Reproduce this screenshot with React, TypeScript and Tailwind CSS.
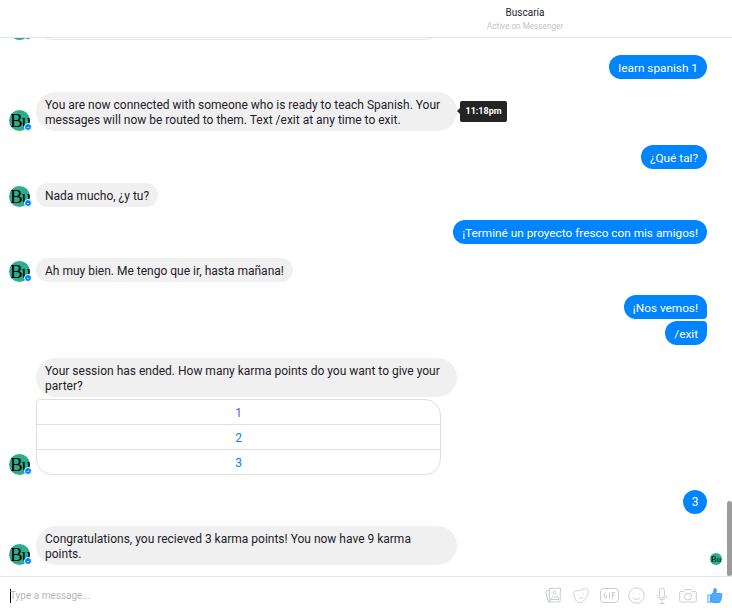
const font = { fontFamily: 'Roboto, sans-serif' };

function Avatar({ small = false }: { small?: boolean }) {
  if (small) {
    return (
      <div className="w-3 h-3 rounded-full bg-[#2aae8e] overflow-hidden flex items-center justify-center whitespace-nowrap text-[9px] leading-3 text-black font-['Liberation_Serif',serif]">
        Bu
      </div>
    );
  }
  return (
    <div className="relative w-[21px] h-[21px] shrink-0">
      <div className="w-[21px] h-[21px] rounded-full bg-[#2aae8e] overflow-hidden flex items-center whitespace-nowrap pl-px text-[19px] leading-[21px] tracking-[-1px] text-black font-['Liberation_Serif',serif]">
        Bu
      </div>
      <div className="absolute -right-[2px] bottom-0 w-[6px] h-[6px] rounded-full bg-[#0084ff] border border-white box-content flex items-center justify-center">
        <div className="w-[2px] h-px bg-white/70" />
      </div>
    </div>
  );
}

function Theirs({ children, mt, tip = false }: { children: React.ReactNode; mt: string; tip?: boolean }) {
  return (
    <div className={`flex items-end pl-[9px] ${mt}`}>
      <Avatar />
      <div className="relative ml-[6px] max-w-[421px]">
        <div className="bg-[#f1f0f0] rounded-[20px] px-[9px] pt-[6px] pb-[3px] text-[12px] leading-[15px] text-[#1d2129] min-h-[24px]">
          {children}
        </div>
        {tip && (
          <div className="absolute left-full top-[9px] ml-[3px] bg-[#242424] text-white text-[9px] leading-[21px] font-bold h-[21px] w-[47px] rounded-[2px] text-center">
            11:18pm
            <div className="absolute -left-[3px] top-[7px] w-0 h-0 border-y-[3px] border-y-transparent border-r-[3px] border-r-[#242424]" />
          </div>
        )}
      </div>
    </div>
  );
}

function Mine({ children, mt, top = false, bottom = false }: { children: React.ReactNode; mt: string; top?: boolean; bottom?: boolean }) {
  return (
    <div className={`flex justify-end pr-[25px] ${mt}`}>
      <div
        className={`bg-[#0084ff] text-white text-[11.800px] leading-[15px] px-[9px] pt-[6px] h-6 rounded-[12px] whitespace-nowrap ${top ? "rounded-br-[4px]" : ""} ${bottom ? "rounded-tr-[4px]" : ""}`}
      >
        {children}
      </div>
    </div>
  );
}

function Composer() {
  const cls = "text-[#c4c7ca]";
  return (
    <div className="h-9 border-t border-[#e4e6e8] flex items-center pt-[2px] pl-[10px] pr-[9px] bg-white">
      <div className="w-px h-[14px] bg-black -mr-px" />
      <div className="flex-1 text-[10px] leading-[14px] text-[#b4b7bb]">Type a message...</div>
      <div className="flex items-center">
        <svg className={cls} width="16" height="17" viewBox="0 0 16 17" fill="none" stroke="currentColor" strokeWidth="0.9">
          <path d="M4 3.300 .7 4.500l2.600 10.300 3-.9" />
          <path d="M4.300 1.600 15.500 1l-.4 13.800-10.800.3z" />
          <circle cx="9.500" cy="5.500" r="1.300" />
          <path d="m5.500 12.500 3-3.500 2 2 1.800-1.500 1.700 3z" />
        </svg>
        <svg className={`${cls} ml-3`} width="16" height="17" viewBox="0 0 17 17" fill="none" stroke="currentColor" strokeWidth="0.9">
          <path d="M1 6c0-1.300.6-2 1.500-2.200C5 3.300 7 3.400 9 2.400c2-1 3.500-1.300 5-1.200 1 .1 1.700.8 1.900 1.800.5 3 0 5.500-1.900 8-1.800 2.400-3.500 4.500-6 5-2.500.4-4-.7-5-2.500C2 11.500 1 9 1 6z" />
          <path d="M5 7.800h.8M10.500 6.300h.8" strokeWidth="1.300" />
          <path d="M6 11c1.500 1 3.500.5 4.800-1.300" />
        </svg>
        <svg className={`${cls} ml-[10px]`} width="21" height="17" viewBox="0 0 20 17" fill="none" stroke="currentColor" strokeWidth="0.9">
          <rect x="1" y="1.500" width="18" height="14" rx="3.500" />
          <path d="M7 6.200c-.8-.7-2.500-.4-2.500 2.300s1.700 3 2.500 2.300V8.800H5.800M10 5.500v6M13 11.500v-6h2.500M13 8.300h2.200" />
        </svg>
        <svg className={`${cls} ml-2`} width="17" height="17" viewBox="0 0 17 17" fill="none" stroke="currentColor" strokeWidth="0.9">
          <circle cx="8.500" cy="8.500" r="7.700" />
          <path d="M5.500 6.500v.6M11.500 6.500v.6" strokeWidth="1.200" />
          <path d="M4.800 10.500c1.500 2.500 5.900 2.500 7.400 0" />
        </svg>
        <svg className={`${cls} ml-[11px]`} width="12" height="17" viewBox="0 0 12 17" fill="none" stroke="currentColor" strokeWidth="0.9">
          <rect x="3.500" y="1" width="5" height="10" rx="2.500" />
          <path d="M1.500 8c0 6 9 6 9 0M6 13v3.500M3.500 16.500h5" />
        </svg>
        <svg className={`${cls} ml-[11px]`} width="18" height="17" viewBox="0 0 18 17" fill="none" stroke="currentColor" strokeWidth="0.9">
          <path d="M1.500 4.500h3l1.500-2h6l1.500 2h3c.5 0 .8.300.8.800v8.900c0 .5-.3.800-.8.800h-15c-.5 0-.8-.3-.8-.8V5.300c0-.5.300-.8.800-.8z" />
          <circle cx="9" cy="9.500" r="3.500" />
          <path d="M14.500 6.500h.8" />
        </svg>
        <svg className="ml-[10px]" width="16" height="17" viewBox="0 0 17 17" fill="none">
          <path d="M1 8h3v7.500H1z" stroke="#6bb5ff" strokeWidth="1.300" />
          <path d="M4 8c2-1 3.500-3.500 3.500-6 0-1.500 2.500-1.200 2.500 1 0 1.500-.5 2.500-1 3.500h5.500c1.800 0 1.800 2.500.5 2.800 1 .7.700 2.300-.3 2.600.6.800.2 2-.7 2.200.2 1-.5 1.900-1.500 1.900H7c-1.300 0-2-.5-3-1z" fill="#4fa9ff" stroke="#2f97ff" strokeWidth="1" />
        </svg>
      </div>
    </div>
  );
}

export default function App() {
  return (
    <div className="relative w-[732px] h-[612px] bg-white flex flex-col overflow-hidden" style={font}>
      <header className="h-[38px] shrink-0 border-b border-[#e4e6e8] flex flex-col items-center pt-[6px] pl-[318px]">
        <div className="text-[10px] leading-[14px] text-[#1d2129]">Buscaría</div>
        <div className="text-[8.200px] leading-[11px] mt-px text-[#bec3c9]">Active on Messenger</div>
      </header>

      <main className="relative flex-1 min-h-0 overflow-hidden">
        <div className="flex items-end pl-[9px] -mt-[19px] h-[21px]">
          <Avatar />
          <div className="ml-[6px] w-[405px] h-[21px] border border-[#e4e6e8] rounded-b-[16px]" />
        </div>

        <Mine mt="mt-[15px]">learn spanish 1</Mine>

        <Theirs mt="mt-[13px]" tip>
          You are now connected with someone who is ready to teach Spanish. Your messages will now be routed to them. Text /exit at any time to exit.
        </Theirs>

        <Mine mt="mt-[14px]">¿Qué tal?</Mine>
        <Theirs mt="mt-[14px]">Nada mucho, ¿y tu?</Theirs>
        <Mine mt="mt-[13px]">¡Terminé un proyecto fresco con mis amigos!</Mine>
        <Theirs mt="mt-[14px]">Ah muy bien. Me tengo que ir, hasta mañana!</Theirs>
        <Mine mt="mt-[13px]" top>¡Nos vemos!</Mine>
        <Mine mt="mt-[2px]" bottom>/exit</Mine>

        <div className="flex items-end pl-[9px] mt-[13px]">
          <Avatar />
          <div className="ml-[6px] w-[421px]">
            <div className="bg-[#f1f0f0] rounded-[20px] px-[9px] pt-[6px] pb-[3px] text-[12px] leading-[15px] text-[#1d2129]">
              Your session has ended. How many karma points do you want to give your parter?
            </div>
            <div className="mt-[2px] w-[405px] border border-[#dddfe2] rounded-[16px] rounded-tl-[4px] text-center text-[12px] text-[#0084ff]">
              <div className="h-6 leading-[26px] text-[#4b5ff0]">1</div>
              <div className="h-[25px] leading-[26px] border-t border-[#dddfe2]">2</div>
              <div className="h-[25px] leading-[26px] border-t border-[#dddfe2]">3</div>
            </div>
          </div>
        </div>

        <div className="flex justify-end pr-[25px] mt-[15px]">
          <div className="w-6 h-6 rounded-full bg-[#0084ff] text-white text-[12px] leading-6 text-center">3</div>
        </div>

        <Theirs mt="mt-[12px]">
          Congratulations, you recieved 3 karma points! You now have 9 karma points.
        </Theirs>

        <div className="absolute right-[10px] bottom-[11px]">
          <Avatar small />
        </div>
        <div className="absolute right-0 bottom-0 w-[5px] h-[75px] rounded-[3px] bg-[#9b9b9b]" />
      </main>

      <Composer />
    </div>
  );
}
